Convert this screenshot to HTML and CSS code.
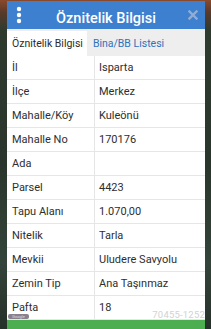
FILE: index.html
```html
<!DOCTYPE html>
<html lang="tr">
<head>
<meta charset="utf-8">
<link rel="stylesheet" href="styles.css">
</head>
<body>
<div class="dialog">
  <div class="header">
    <svg class="dots" width="8" height="18" viewBox="0 0 8 18">
      <circle cx="4" cy="3" r="2.2" fill="#fff"/>
      <circle cx="4" cy="9" r="2.2" fill="#fff"/>
      <circle cx="4" cy="15" r="2.2" fill="#fff"/>
    </svg>
    <div class="title">Öznitelik Bilgisi</div>
    <svg class="close" width="10" height="10" viewBox="0 0 10 10">
      <path d="M1.5 1.5 L8.5 8.5 M8.5 1.5 L1.5 8.5" stroke="#93acd2" stroke-width="2.4" stroke-linecap="square"/>
    </svg>
  </div>
  <div class="tabs">
    <div class="tab active">Öznitelik Bilgisi</div>
    <div class="tab">Bina/BB Listesi</div>
  </div>
  <div class="table">
    <div class="row"><div class="k">İl</div><div class="v">Isparta</div></div>
    <div class="row"><div class="k">İlçe</div><div class="v">Merkez</div></div>
    <div class="row"><div class="k">Mahalle/Köy</div><div class="v">Kuleönü</div></div>
    <div class="row"><div class="k">Mahalle No</div><div class="v">170176</div></div>
    <div class="row"><div class="k">Ada</div><div class="v"></div></div>
    <div class="row"><div class="k">Parsel</div><div class="v">4423</div></div>
    <div class="row"><div class="k">Tapu Alanı</div><div class="v">1.070,00</div></div>
    <div class="row"><div class="k">Nitelik</div><div class="v">Tarla</div></div>
    <div class="row"><div class="k">Mevkii</div><div class="v">Uludere Savyolu</div></div>
    <div class="row"><div class="k">Zemin Tip</div><div class="v">Ana Taşınmaz</div></div>
    <div class="row"><div class="k">Pafta</div><div class="v">18</div></div>
  </div>
  <div class="footer"></div>
</div>
<span class="badge">Google</span>
<span class="mark">70455-1252</span>
</body>
</html>
```
FILE: styles.css
```css
html, body {
  margin: 0;
  padding: 0;
}
body {
  width: 211px;
  height: 329px;
  overflow: hidden;
  position: relative;
  font-family: Roboto, "Noto Sans", sans-serif;
  background: linear-gradient(180deg, #8a4a2c 0px, #5a3a2a 12px, #2f3a2f 30px, #2a362c 50%, #34443a 80%, #26302a 100%);
}
.dialog {
  margin: 1px 0 0 7px;
  width: 198px;
  height: 328px;
  display: flex;
  flex-direction: column;
  background: #fff;
}
.header {
  height: 28px;
  flex: none;
  background: #3d80d0;
  display: grid;
  grid-template-columns: 24px 1fr 24px;
}
.dots {
  margin: 5px 0 0 8px;
}
.title {
  align-self: end;
  text-align: center;
  color: #fff;
  font-size: 14.5px;
  font-weight: 500;
  line-height: 14px;
  padding-bottom: 3px;
}
.close {
  margin: 9px 0 0 7px;
}
.tabs {
  height: 27px;
  flex: none;
  background: #eeeeee;
  display: flex;
  align-items: flex-end;
}
.tab {
  height: 25px;
  display: flex;
  align-items: center;
  padding: 0 5px 0 6px;
  font-size: 10.5px;
  color: #2f72bd;
  white-space: nowrap;
}
.tab.active {
  padding: 0 4px 0 5px;
  background: #fff;
  color: #2b2b2b;
}
.table {
  flex: none;
}
.row {
  height: 23px;
  border-bottom: 1px solid #e6e6e6;
  display: grid;
  grid-template-columns: 88px 1fr;
  font-size: 11px;
  color: #2e2e2e;
}
.row > div {
  display: flex;
  align-items: center;
}
.k {
  padding-left: 5px;
  border-right: 1px solid #e6e6e6;
}
.v {
  padding-left: 4px;
}
.footer {
  flex: 1;
  background: #4cae50;
}
.badge {
  position: absolute;
  left: 8px;
  top: 314px;
  width: 21px;
  height: 5px;
  border-radius: 2px;
  background: #8a8090;
  color: #ddd;
  font-size: 4px;
  line-height: 5px;
  text-align: center;
  overflow: hidden;
}
.mark {
  position: absolute;
  right: 6px;
  top: 309px;
  font-size: 9.5px;
  color: #d2d2d2;
  letter-spacing: 0.2px;
}
```
